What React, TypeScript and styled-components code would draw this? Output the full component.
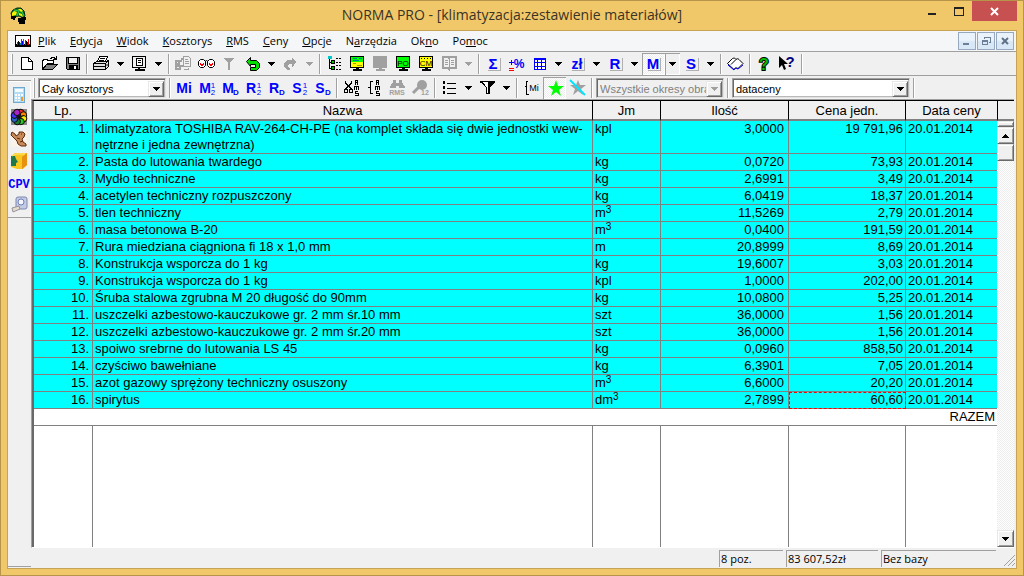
import React from "react";
import styled, { createGlobalStyle, css } from "styled-components";

const ui = `"Open Sans", "Noto Sans", sans-serif`;
const sans = `"Liberation Sans", Arial, sans-serif`;
const face = "#f0f0f0";
const shade = "#a0a0a0";
const columns = "59px 1fr 68px 128px 117px 91px";

const Global = createGlobalStyle`
  * { box-sizing: border-box; }
  body { margin: 0; font-family: ${sans}; font-size: 13px; color: #000; }
  button, select { font: inherit; color: inherit; border: 0; margin: 0; padding: 0; background: none; border-radius: 0; }
  svg { display: block; }
  sup { font-size: 10px; line-height: 0; vertical-align: 4px; }
`;

const Window = styled.div`
  min-height: 100vh;
  display: flex;
  flex-direction: column;
  background: #f0c869;
  border: 1px solid #b6954b;
  padding: 0 6px 6px;
`;

const TitleBar = styled.header`
  height: 29px;
  display: flex;
  align-items: flex-start;
  padding-left: 3px;
`;

const AppIcon = styled.div`
  width: 96px;
  padding-top: 5px;
`;

const Title = styled.h1`
  flex: 1;
  margin: 0;
  padding-top: 4px;
  font: 400 14px/20px ${ui};
  color: #3a3326;
  text-align: center;
`;

const WindowButton = styled.button<{ $close?: boolean }>`
  width: ${(p) => (p.$close ? 45 : 27)}px;
  height: 20px;
  background: ${(p) => (p.$close ? "#c75050" : "transparent")};
  display: flex;
  justify-content: center;
`;

const WindowButtons = styled.div`
  display: flex;
  width: 99px;
`;

const Client = styled.div`
  flex: 1;
  display: flex;
  flex-direction: column;
  background: ${face};
  border: 1px solid #c6a355;
`;

const MenuBar = styled.nav`
  height: 21px;
  display: flex;
  align-items: center;
  background: #f5f6f7;
  border-bottom: 1px solid ${shade};
  padding: 0 2px 0 7px;
`;

const MenuItem = styled.button`
  font: 11px/18px ${ui};
  padding: 0 7px;
  white-space: nowrap;
`;

const MdiButtons = styled.div`
  display: flex;
  gap: 1px;
  margin-left: auto;
`;

const MdiButton = styled.button`
  width: 18px;
  height: 18px;
  border: 1px solid #96a9bf;
  background: linear-gradient(#eaf3fc 45%, #d9e8f7 55%);
`;

const Toolbar = styled.div<{ $ruled?: boolean }>`
  display: flex;
  align-items: flex-start;
  padding: 1px 0 0 ${(p) => (p.$ruled ? 3 : 2)}px;
  height: ${(p) => (p.$ruled ? 24 : 23)}px;
  border-bottom: ${(p) => (p.$ruled ? `1px solid ${shade}` : "0")};
`;

const Grip = styled.span`
  width: 4px;
  height: 20px;
  margin-top: 1px;
  border-left: 1px solid #fff;
  box-shadow: inset 1px 0 ${shade};
`;

const Separator = styled.span`
  width: 6px;
  height: 20px;
  margin-top: 1px;
  background: linear-gradient(90deg, transparent 2px, ${shade} 2px, ${shade} 3px, #fff 3px, #fff 4px, transparent 4px);
`;

const dither = css`
  background: repeating-conic-gradient(#fff 0 25%, #ececec 0 50%) 0 0 / 2px 2px;
`;

const ToolButton = styled.button<{ $pressed?: boolean }>`
  width: 23px;
  height: 22px;
  flex: none;
  ${(p) => p.$pressed && css`${dither} box-shadow: inset 1px 1px ${shade}, inset -1px -1px #fff;`}
`;

const DropButton = styled.button<{ $pressed?: boolean }>`
  width: 15px;
  height: 22px;
  flex: none;
  ${(p) => p.$pressed && `box-shadow: inset 1px 1px ${shade}, inset -1px -1px #fff;`}
`;

const ComboBox = styled.label<{ $width: number; $disabled?: boolean }>`
  display: flex;
  width: ${(p) => p.$width}px;
  height: 20px;
  margin: 1px 1px 0;
  border: 1px solid;
  border-color: ${shade} #e3e3e3 #e3e3e3 ${shade};
  box-shadow: inset 1px 1px #696969, inset -1px -1px #b8b8b8;
  background: ${(p) => (p.$disabled ? face : "#fff")};
  padding: 2px 1px 1px 3px;
  select {
    appearance: none;
    flex: 1;
    min-width: 0;
    font: 11px/16px ${sans};
    color: ${(p) => (p.$disabled ? "#808080" : "#000")};
    opacity: 1;
  }
`;

const raised = css`
  background: ${face};
  border: 1px solid;
  border-color: #e8e8e8 #696969 #696969 #e8e8e8;
  box-shadow: inset 1px 1px #fff, inset -1px -1px ${shade};
`;

const ComboArrow = styled.span`
  width: 16px;
  height: 16px;
  flex: none;
  ${raised}
  display: flex;
  align-items: center;
  justify-content: center;
`;

const Workspace = styled.div`
  flex: 1;
  display: flex;
`;

const SideBar = styled.aside`
  width: 23px;
  display: flex;
  flex-direction: column;
  border-bottom: 1px solid ${shade};
  margin-bottom: 1px;
`;

const SideTools = styled.div`
  display: flex;
  flex-direction: column;
  margin-top: 4px;
  padding: 3px 0 1px;
  border-top: 1px solid ${shade};
  border-bottom: 1px solid ${shade};
  box-shadow: inset 0 1px #fff, inset -1px 0 #fff;
`;

const Main = styled.main`
  flex: 1;
  min-width: 0;
  display: flex;
  flex-direction: column;
`;

const GridFrame = styled.section`
  flex: 1;
  display: flex;
  border-top: 1px solid ${shade};
  border-left: 1px solid ${shade};
  border-bottom: 1px solid #fff;
  margin-right: 2px;
`;

const GridBody = styled.div`
  flex: 1;
  min-width: 0;
  display: flex;
  flex-direction: column;
  background: #fff;
  border-top: 1px solid #000;
  border-left: 2px solid #696969;
`;

const Table = styled.table`
  width: 100%;
  table-layout: fixed;
  border-collapse: separate;
  border-spacing: 0;
  line-height: 16px;
`;

const HeadCell = styled.th`
  height: 20px;
  padding: 2px 0 0;
  font-weight: 400;
  background: ${face};
  border-right: 1px solid #000;
  border-bottom: 2px solid #808080;
  &:last-child { border-right: 0; }
`;

const Cell = styled.td<{ $align?: "right"; $pad?: number; $active?: boolean }>`
  padding: 0 ${(p) => p.$pad ?? 2}px 0 2px;
  background: #0ff;
  border-right: 1px solid #808080;
  border-bottom: 1px solid #808080;
  text-align: ${(p) => p.$align ?? "left"};
  vertical-align: top;
  white-space: nowrap;
  &:last-child { border-right: 0; }
  ${(p) => p.$active && "outline: 1px dashed #f00; outline-offset: -1px;"}
`;

const TotalCell = styled.td`
  padding: 0 2px 0 0;
  text-align: right;
  border-bottom: 1px solid #808080;
`;

const EmptyArea = styled.div`
  flex: 1;
  display: grid;
  grid-template-columns: ${columns};
`;

const EmptyColumn = styled.div`
  border-right: 1px solid #808080;
  &:last-child { border-right: 0; }
`;

const ScrollColumn = styled.div`
  width: 17px;
  display: flex;
  flex-direction: column;
  border-top: 1px solid #000;
  ${dither}
`;

const ScrollHead = styled.div`
  height: 20px;
  background: ${face};
  border-left: 1px solid #000;
  border-bottom: 2px solid #808080;
`;

const Splitter = styled.div`
  height: 6px;
  ${raised}
`;

const ScrollButton = styled.button`
  height: 17px;
  ${raised}
  display: flex;
  align-items: center;
  justify-content: center;
`;

const ScrollTrack = styled.div`
  flex: 1;
`;

const ScrollThumb = styled.div`
  height: 17px;
  ${raised}
`;

const StatusBar = styled.footer`
  height: 20px;
  display: flex;
  justify-content: flex-end;
  align-items: flex-end;
  gap: 3px;
  padding-bottom: 1px;
`;

const StatusPane = styled.div<{ $width: number }>`
  width: ${(p) => p.$width}px;
  height: 17px;
  padding-left: 1px;
  border-top: 1px solid ${shade};
  border-left: 1px solid ${shade};
  font: 11px/16px ${ui};
  white-space: nowrap;
`;

const SizeGrip = styled.div`
  width: 17px;
  display: flex;
  justify-content: flex-end;
`;

/* ---------- drawings ---------- */

const blue = "#0000ff";

const Art = ({ w = 23, h = 22, smooth, children }: { w?: number; h?: number; smooth?: boolean; children: React.ReactNode }) => (
  <svg width={w} height={h} viewBox={`0 0 ${w} ${h}`} fill="none" shapeRendering={smooth ? "auto" : "crispEdges"} aria-hidden="true">
    {children}
  </svg>
);

const Caret = ({ color = "#000" }: { color?: string }) => (
  <Art w={15}>
    <path fill={color} d="M4 9h7v1h-1v1h-1v1h-1v1h-1v-1h-1v-1h-1v-1h-1z" />
  </Art>
);

const SmallCaret = ({ up, color = "#000" }: { up?: boolean; color?: string }) => (
  <Art w={7} h={4}>
    <path fill={color} d={up ? "M3 0h1v1h1v1h1v1h1v1h-7v-1h1v-1h1v-1h1z" : "M0 0h7v1h-1v1h-1v1h-1v1h-1v-1h-1v-1h-1v-1h-1z"} />
  </Art>
);

/* Blue letter on a sheet with a grey shadow on its right and bottom side. */
const Letter = ({ children, size = 15 }: { children: string; size?: number }) => (
  <Art>
    <path stroke="#b0b0b0" d="M6 17.5h12.500v-13" />
    <text x="11" y="16" fontSize={size} fontWeight="700" fontFamily={sans} fill={blue} textAnchor="middle">{children}</text>
  </Art>
);

const Lead = ({ main, top, sub }: { main: string; top?: string; sub?: string }) => (
  <Art>
    <text x={sub || top ? 9 : 11} y="16" fontSize="14" fontWeight="700" fontFamily={sans} fill={blue} textAnchor="middle">{main}</text>
    {top && <text x="17" y="11" fontSize="8" fontFamily={sans} fill={blue} textAnchor="middle">{top}</text>}
    {sub && <text x="17" y="18" fontSize="8" fontWeight={top ? 400 : 700} fontFamily={sans} fill={blue} textAnchor="middle">{sub}</text>}
  </Art>
);

const Monitor = ({ fill, text, line = "#000", children }: { fill: string; text?: string; line?: string; children?: React.ReactNode }) => (
  <Art>
    <rect x="4.5" y="3.5" width="13" height="11" fill={fill} stroke={line} />
    {children}
    <path fill={line} d="M10 15h3v1h-3zM7 16h9v2h-9z" />
    {text && <text x="11" y="13" fontSize="8" fontFamily={sans} textAnchor="middle" fill="#000">{text}</text>}
  </Art>
);

const icons: Record<string, React.ReactNode> = {
  new: <Art><path fill="#fff" stroke="#000" d="M6.5 4.5h7l4 4v8h-11z" /><path stroke="#000" d="M13.5 4.5v4h4" /></Art>,
  open: (
    <Art>
      <path fill="#fff" stroke="#000" d="M4.5 15.5v-8h1v-1h4v1h6v3h-6z" />
      <path fill="#808080" stroke="#000" d="M4.5 16.5l4-5h11l-5 5z" />
      <path stroke="#000" d="M12 5.5h1v-1h3v1h1v1h1M18.5 3v4M15 6.5h4" />
    </Art>
  ),
  save: (
    <Art>
      <path fill="#808080" stroke="#000" d="M5.5 4.5h13v12h-12l-1-1z" />
      <path fill="#f0f0f0" d="M8 5h8v5H8z" /><path stroke="#000" d="M7.5 5v5.5h9V5" />
      <path fill="#000" d="M8 12h9v4H8z" /><path fill="#fff" d="M13 13h2v3h-2z" />
    </Art>
  ),
  print: (
    <Art>
      <path fill="#fff" stroke="#000" d="M7.5 8.5l2-5h8l-2 5z" />
      <path stroke="#000" d="M10 5.5h5M9 7.5h5" />
      <path fill="#e0e0e0" stroke="#000" d="M3.5 10.5l3-2h10l2-1v6l-3 3h-12z" />
      <path stroke="#000" d="M3 10.5h12.5v6M15.5 10.5l3-3M4 13.5h11" /><path fill="#808080" d="M16 11h2v2h-2z" />
    </Art>
  ),
  preview: (
    <Art>
      <rect x="4.5" y="3.5" width="13" height="11" fill="#f0f0f0" stroke="#000" />
      <path fill="#fff" stroke="#000" d="M8.5 5.5h6v7h-6z" /><path stroke="#000" d="M10 7.5h3M10 9.5h3" />
      <path stroke="#000" d="M10.5 15v1M11.5 15v1M7 16.5h9v1h-9z" />
    </Art>
  ),
  cut: (
    <Art>
      <path stroke="#a0a0a0" strokeWidth="2" d="M4 8h3v3H4zM4 13h4v3H4zM8 9l3-4M8 13h3" />
      <path fill="#f0f0f0" stroke="#a0a0a0" d="M11.5 3.5h5l2 2v8h-7z" />
      <path stroke="#a0a0a0" d="M13 6.5h3M13 8.5h4M13 10.5h4M12 16.5h4v-2" />
    </Art>
  ),
  glasses: (
    <Art smooth>
      <path fill="#fff" stroke="#000" d="M5.500 6.500h3l2 2v4l-2 2h-3l-2-2v-4zM14.500 6.500h3l2 2v4l-2 2h-3l-2-2v-4zM10 8.500l1.500-1 1.500 1" />
      <path fill="#f00" d="M5 10h1v1h2v-1h1v2h-1v1h-2v-1h-1zM14 10h1v1h2v-1h1v2h-1v1h-2v-1h-1z" />
    </Art>
  ),
  funnel: <Art><path fill="#a0a0a0" d="M6 5h10v1h-1v1h-1v1h-1v1h-1v8h-2V9H9V8H8V7H7V6H6z" /></Art>,
  undo: <Art smooth><path fill="#00e000" stroke="#000" d="M5.500 8.500l4-4v3h6l3 3v4l-3 3h-6v-3h5v-3h-5v2z" /></Art>,
  redo: <Art><path fill="#a0a0a0" d="M17 9l-4-5v3H8l-3 3v4l3 3h3v-2l-2-1v-2l1-1h3v4z" /></Art>,
  tree: (
    <Art>
      <path fill="#00c8c8" d="M5 3h4v3H5z" />
      <path stroke="#000" d="M6.5 6v10M7 9.5h2M7 15.5h2" />
      <path stroke="#000" d="M13 5.5h6M13 9.5h6M13 12.5h6M13 16.5h6" strokeDasharray="2 1" />
      <path fill="#00c000" stroke="#000" d="M8.5 7.5h3v3h-3zM8.5 13.5h3v3h-3z" />
    </Art>
  ),
  screen: <Monitor fill="#00ff00"><path fill="#ff0" d="M5 9h12v5H5z" /><path stroke="#0080a0" d="M7 5.500h4M13 5.500h3M7 7.500h6" /><path stroke="#a0a000" d="M7 10.500h3M11 12.500h5" /></Monitor>,
  screenOff: <Monitor fill="#a0a0a0" line="#a0a0a0" />,
  po: <Monitor fill="#00ff00" text="PO" />,
  cm: <Monitor fill="#ffff00" text="CM"><path stroke="#000" d="M6 5.5h11" strokeDasharray="1 2" /></Monitor>,
  book: (
    <Art>
      <path fill="#f0f0f0" stroke="#a0a0a0" strokeWidth="2" d="M5 4h5l1 1 1-1h6v11h-6l-1 1-1-1H5z" />
      <path stroke="#a0a0a0" d="M11.5 5v13M7 7.5h3M7 9.5h3M7 11.5h3M13 7.5h3M13 9.5h3M13 11.5h3" />
    </Art>
  ),
  sum: <Letter>Σ</Letter>,
  percent: (
    <Art>
      <path stroke="#f00" d="M4 15.500h5M4 17.500h5" /><path stroke={blue} d="M4 9.500h5M6.500 7v5" />
      <text x="14" y="15" fontSize="12" fontWeight="700" fontFamily={sans} fill={blue} textAnchor="middle">%</text>
    </Art>
  ),
  table: <Art><path fill="#fff" stroke={blue} d="M6.5 5.5h11v11h-11z" /><path fill={blue} d="M6 5h12v2H6z" /><path stroke={blue} d="M9.5 5v12M13.5 5v12M6 9.5h12M6 13.5h12" /></Art>,
  zl: <Letter size={14}>zł</Letter>,
  r: <Letter>R</Letter>,
  m: <Letter>M</Letter>,
  s: <Letter>S</Letter>,
  notebook: (
    <Art smooth>
      <path fill="#fff" stroke="#000" d="M3.5 10.5l5-5c2-1 3 0 3.5 1 1-1 2-1 3 0l4 4-5 5c-2-1-3-1-4 1z" /><path stroke="#000" d="M12 6.5l-5 5" />
      <path stroke={blue} d="M4 12l6 5c1-2 2-2 4-1l5-4" />
    </Art>
  ),
  help: <Art smooth><text x="11" y="17" fontSize="16" fontWeight="700" fontFamily={sans} textAnchor="middle" fill="#00c000" stroke="#000" strokeWidth="2" paintOrder="stroke">?</text></Art>,
  whatsThis: (
    <Art smooth>
      <path fill="#000" d="M3 3v12l3-3 2 5 2-1-2-5h4z" />
      <text x="14" y="14" fontSize="15" fontWeight="700" fontFamily={sans} textAnchor="middle" fill="#000080">?</text>
    </Art>
  ),
  cutRms: (
    <Art>
      <path stroke="#000" d="M5.5 4v2l6 6M11.5 4v2l-6 6M4.5 12.5h3v3h-3zM9.5 12.5h3v3h-3z" />
      <path stroke="#000" d="M15.5 8V3.5h2v2h-2M17.5 6v2M14.500 13V9.500h2v3M16.500 9.500h2v3M18 14.500h-3v2h3v2h-3" />
    </Art>
  ),
  braceRms: (
    <Art>
      <path stroke="#000" d="M10 4.5H7.5v6h-3M7.5 10v6.500h2.500" />
      <path stroke="#000" d="M13.500 8V3.500h2v2h-2M15.500 6v2M12.500 13V9.500h2v3M14.500 9.500h2v3M16 14.500h-3v2h3v2h-3" />
    </Art>
  ),
  findRms: (
    <Art>
      <path fill="#a0a0a0" d="M7 3h3v3h3V3h3v2l3 5v1h-6V9h-3v2H4v-1l3-5z" />
      <text x="11" y="18" fontSize="7" fontWeight="700" fontFamily={sans} fill="#a0a0a0" textAnchor="middle">RMS</text>
    </Art>
  ),
  findItem: (
    <Art smooth>
      <circle cx="13" cy="8" r="5" fill="#a0a0a0" /><path stroke="#a0a0a0" strokeWidth="3" d="M10 10l-6 6" />
      <text x="16" y="18" fontSize="7" fontWeight="700" fontFamily={sans} fill="#a0a0a0" textAnchor="middle">12</text>
    </Art>
  ),
  list: (
    <Art>
      <path fill="#000" d="M5 4h2v3H5zM5 9h2v3H5zM5 14h2v3H5z" />
      <path stroke="#000" d="M9 6.500h9M9 11.500h9M9 16.500h9" />
    </Art>
  ),
  filter: <Art><path fill="#000" d="M4 4h15v2h-1v1h-1v1h-1v1h-1v1h-1v7h-4v-7H9V9H8V8H7V7H6V6H4z" /><path fill="#fff" d="M7 5h5v11h-1v-6h-1V9H9V7H8V6H7z" /></Art>,
  braceMi: (
    <Art>
      <path stroke="#000" d="M8 4.500H6.500v5h-2M6.500 10v7h2" />
      <text x="14" y="14" fontSize="9" fontFamily={sans} textAnchor="middle" fill="#000">Mi</text>
    </Art>
  ),
  star: <Art smooth><path fill="#00ff00" d="M13 3l2 6h6l-5 4 2 6-5-4-5 4 2-6-5-4h6z" /></Art>,
  starOff: <Art smooth><path fill="#a0a0a0" d="M12 3l2 5h6l-5 4 2 6-5-4-5 4 2-6-5-4h6z" /><path stroke="#00e5ff" strokeWidth="2" d="M4 3l15 15" /></Art>,
};

const sideIcons: [string, React.ReactNode][] = [
  ["Kalkulator", (
    <Art>
      <rect x="5.500" y="3.500" width="11" height="15" fill="#b5dcf5" stroke="#6fa8d0" /><path fill="#f8fcff" d="M7 5h8v3H7z" />
      <path fill="#fff" d="M7 10h2v2H7zM10 10h2v2h-2zM13 10h2v2h-2zM7 13h2v2H7zM10 13h2v2h-2zM7 16h2v1H7zM10 16h2v1h-2z" /><path fill="#f39a2c" d="M13 13h2v4h-2z" />
    </Art>
  )],
  ["Kolory", (
    <Art smooth>
      <rect x="3" y="3" width="16" height="16" fill="#888" />
      {["#f22", "#f80", "#fe0", "#2c2", "#1a7a30", "#26c", "#43f", "#a2c"].map((c, i) => (
        <ellipse key={c} cx="11" cy="6" rx="3" ry="3" fill={c} stroke="#111" strokeWidth="1" transform={`rotate(${i * 45 + 20} 11 11)`} />
      ))}
      <circle cx="11" cy="11" r="2" fill="#111" />
    </Art>
  )],
  ["Postać", (
    <Art smooth>
      <rect x="3" y="3" width="16" height="16" fill="#fbf3ea" />
      <path fill="#c88a58" stroke="#5a2a10" d="M4 4l3 2 1 2 3-2V4h4l2 2-1 3-2 2 1 3 3 2v2h-5l-3-2-1-3-3-3-3-3z" />
      <path stroke="#5a2a10" d="M13 6h1M9 10l3 1M12 14l3-1" />
    </Art>
  )],
  ["Katalog", (
    <Art smooth>
      <path fill="#f8c820" d="M3 6l4-3h12v12l-4 4H9l-6-2z" /><path fill="#e89010" d="M14 7l5-4v12l-5 4z" />
      <path fill="#207848" d="M3 6h4l1 3 2 3-2 1v3H3z" /><path stroke="#ffe878" d="M4 6l4-2h9" />
    </Art>
  )],
  ["CPV", (
    <Art><text x="11" y="16" fontSize="12" fontWeight="700" fontFamily='"Liberation Mono", monospace' textAnchor="middle" fill={blue}>CPV</text></Art>
  )],
  ["Miara", (
    <Art smooth>
      <rect x="8" y="3" width="11" height="12" rx="2" fill="#c3cbe4" stroke="#8088b0" /><circle cx="13" cy="8" r="3" fill="#f4f6ff" stroke="#7080b8" />
      <path fill="#e4dcc8" stroke="#9890a0" d="M4 14l7-2 1 3-7 3z" />
    </Art>
  )],
];

/* ---------- data ---------- */

const menu: [string, string, string][] = [
  ["", "P", "lik"], ["", "E", "dycja"], ["", "W", "idok"], ["", "K", "osztorys"], ["", "R", "MS"],
  ["", "C", "eny"], ["", "O", "pcje"], ["N", "a", "rzędzia"], ["Ok", "n", "o"], ["Po", "m", "oc"],
];

/* "|" is a separator, "v" a drop-down arrow, "v-" a disabled one, "v+" a pressed one. */
const standardTools = "new open save | print v preview v | cut glasses funnel undo v redo v- | tree screen screenOff po cm book v- | sum percent table v zl v r v m+ v+ s v | notebook | help whatsThis |".split(" ");

const costTools: [string, string?, string?][] = [["Mi"], ["M", "1", "2"], ["M", undefined, "D"], ["R", "1", "2"], ["R", undefined, "D"], ["S", "1", "2"], ["S", undefined, "D"]];

const viewTools = "| cutRms braceRms findRms findItem | list v filter v | braceMi star+ starOff |".split(" ");

const cubic = <>m<sup>3</sup></>;

const rows: [React.ReactNode, React.ReactNode, string, string][] = [
  [<>klimatyzatora TOSHIBA RAV-264-CH-PE (na komplet składa się dwie jednostki wew-<br />nętrzne i jedna zewnętrzna)</>, "kpl", "3,0000", "19 791,96"],
  ["Pasta do lutowania twardego", "kg", "0,0720", "73,93"],
  ["Mydło techniczne", "kg", "2,6991", "3,49"],
  ["acetylen techniczny rozpuszczony", "kg", "6,0419", "18,37"],
  ["tlen techniczny", cubic, "11,5269", "2,79"],
  ["masa betonowa B-20", cubic, "0,0400", "191,59"],
  ["Rura miedziana ciągniona fi 18 x 1,0 mm", "m", "20,8999", "8,69"],
  ["Konstrukcja wsporcza do 1 kg", "kg", "19,6007", "3,03"],
  ["Konstrukcja wsporcza do 1 kg", "kpl", "1,0000", "202,00"],
  ["Śruba stalowa zgrubna M 20 długość do 90mm", "kg", "10,0800", "5,25"],
  ["uszczelki azbestowo-kauczukowe gr. 2 mm śr.10 mm", "szt", "36,0000", "1,56"],
  ["uszczelki azbestowo-kauczukowe gr. 2 mm śr.20 mm", "szt", "36,0000", "1,56"],
  ["spoiwo srebrne do lutowania LS 45", "kg", "0,0960", "858,50"],
  ["czyściwo bawełniane", "kg", "6,3901", "7,05"],
  ["azot gazowy sprężony techniczny osuszony", cubic, "6,6000", "20,20"],
  ["spirytus", <>d{cubic}</>, "2,7899", "60,60"],
];

const Tools = ({ items }: { items: string[] }) => (
  <>
    {items.map((item, i) => {
      if (item === "|") return <Separator key={i} />;
      if (item[0] === "v") {
        return <DropButton key={i} aria-label="Rozwiń" disabled={item === "v-"} $pressed={item === "v+"}><Caret color={item === "v-" ? shade : "#000"} /></DropButton>;
      }
      const name = item.replace("+", "");
      return <ToolButton key={i} aria-label={name} $pressed={item.endsWith("+")}>{icons[name]}</ToolButton>;
    })}
  </>
);

const Combo = ({ value, label, width, disabled }: { value: string; label: string; width: number; disabled?: boolean }) => (
  <ComboBox $width={width} $disabled={disabled}>
    <select aria-label={label} disabled={disabled}><option>{value}</option></select>
    <ComboArrow><SmallCaret color={disabled ? shade : "#000"} /></ComboArrow>
  </ComboBox>
);

export default function App() {
  return (
    <Window>
      <Global />
      <TitleBar>
        <AppIcon>
          <Art w={18} h={18} smooth>
            <path fill="#0a7a2a" stroke="#002a10" d="M1 7l2-3 4-2h4l3 3 1 5-2 2-4-2-7 1z" />
            <path fill="#f4f000" d="M2 7l2-2 3 1-1 3-4 1zM8 3h3l2 2-2 1zM9 7l3 1 1 3-4-2z" />
            <path stroke="#30d050" strokeWidth="1" d="M4 4l5 1M7 10l2-5M12 6l2 4" />
            <path fill="#000" d="M1 10h5v2H5v2H3v-1H1zM8 12h3l1-1h4v3h-1v4H9v-2H8z" />
          </Art>
        </AppIcon>
        <Title>NORMA PRO - [klimatyzacja:zestawienie materiałów]</Title>
        <WindowButtons>
          <WindowButton aria-label="Minimalizuj"><Art w={11} h={20}><path fill="#222" d="M2 12h8v2H2z" /></Art></WindowButton>
          <WindowButton aria-label="Maksymalizuj"><Art w={11} h={20}><path fill="#222" d="M1 6h10v9H1zM2 8v6h8V8z" fillRule="evenodd" /></Art></WindowButton>
          <WindowButton $close aria-label="Zamknij"><Art w={9} h={20} smooth><path stroke="#fff" strokeWidth="2" d="M1 7l7 7M8 7l-7 7" /></Art></WindowButton>
        </WindowButtons>
      </TitleBar>
      <Client>
        <MenuBar>
          <Art w={16} h={14}>
            <path fill="#fff" stroke="#000" d="M0.500 1.500h15v11H0.500z" /><path fill="#000" d="M1 10h14v2H1zM3 7h1v4H3zM11 7h1v4h-1z" />
            <path fill="#e00" d="M2 8h1v3H2zM6 5h1v6H6zM10 6h1v5h-1zM13 5h1v6h-1z" /><path fill="#00e" d="M4 8h1v3H4zM7 7h1v4H7zM12 8h1v3h-1z" /><path fill="#088" d="M8 5h1v6H8zM5 9h1v2H5z" />
          </Art>
          {menu.map(([a, u, b]) => <MenuItem key={a + u + b}>{a}<u>{u}</u>{b}</MenuItem>)}
          <MdiButtons>
            <MdiButton aria-label="Minimalizuj dokument"><Art w={16} h={16}><path fill="#6b7f96" d="M4 10h6v2H4z" /></Art></MdiButton>
            <MdiButton aria-label="Przywróć dokument"><Art w={16} h={16}><path stroke="#6b7f96" d="M6.500 6V4.500h6v5H11M4.500 7.500h5v4h-5zM4 8.500h6" /></Art></MdiButton>
            <MdiButton aria-label="Zamknij dokument"><Art w={16} h={16} smooth><path stroke="#5f7287" strokeWidth="2" d="M5 5l6 6M11 5l-6 6" /></Art></MdiButton>
          </MdiButtons>
        </MenuBar>
        <Toolbar $ruled>
          <Grip />
          <Tools items={standardTools} />
        </Toolbar>
        <Workspace>
          <SideBar>
            <SideTools>
              {sideIcons.map(([name, art]) => <ToolButton key={name} aria-label={name}>{art}</ToolButton>)}
            </SideTools>
          </SideBar>
          <Main>
            <Toolbar>
              <Grip />
              <Combo label="Zakres" value="Cały kosztorys" width={128} />
              <Separator />
              {costTools.map(([main, top, sub], i) => <ToolButton key={i}><Lead main={main} top={top} sub={sub} /></ToolButton>)}
              <Tools items={viewTools} />
              <Combo label="Okres" value="Wszystkie okresy obrachunkowe" width={128} disabled />
              <Separator />
              <Combo label="Cena" value="dataceny" width={178} />
              <Separator />
            </Toolbar>
            <GridFrame>
              <GridBody>
                <Table>
                  <colgroup>
                    <col style={{ width: 59 }} /><col /><col style={{ width: 68 }} /><col style={{ width: 128 }} /><col style={{ width: 117 }} /><col style={{ width: 91 }} />
                  </colgroup>
                  <thead>
                    <tr>{["Lp.", "Nazwa", "Jm", "Ilość", "Cena jedn.", "Data ceny"].map((h) => <HeadCell key={h}>{h}</HeadCell>)}</tr>
                  </thead>
                  <tbody>
                    {rows.map(([name, unit, amount, price], i) => (
                      <tr key={i}>
                        <Cell $align="right" $pad={3}>{i + 1}.</Cell>
                        <Cell>{name}</Cell>
                        <Cell>{unit}</Cell>
                        <Cell $align="right" $pad={4}>{amount}</Cell>
                        <Cell $align="right" $active={i === rows.length - 1}>{price}</Cell>
                        <Cell>20.01.2014</Cell>
                      </tr>
                    ))}
                    <tr><TotalCell colSpan={6}>RAZEM</TotalCell></tr>
                  </tbody>
                </Table>
                <EmptyArea>{[0, 1, 2, 3, 4, 5].map((c) => <EmptyColumn key={c} />)}</EmptyArea>
              </GridBody>
              <ScrollColumn>
                <ScrollHead />
                <Splitter />
                <ScrollButton aria-label="W górę"><SmallCaret up /></ScrollButton>
                <ScrollTrack><ScrollThumb /></ScrollTrack>
                <ScrollButton aria-label="W dół"><SmallCaret /></ScrollButton>
              </ScrollColumn>
            </GridFrame>
            <StatusBar>
              <StatusPane $width={64}>8 poz.</StatusPane>
              <StatusPane $width={92}>83 607,52zł</StatusPane>
              <StatusPane $width={115}>Bez bazy</StatusPane>
              <SizeGrip><Art w={13} h={13} smooth><path stroke="#a0a0a0" strokeWidth="1" d="M1 12L12 1M5 12l7-7M9 12l3-3" /></Art></SizeGrip>
            </StatusBar>
          </Main>
        </Workspace>
      </Client>
    </Window>
  );
}
